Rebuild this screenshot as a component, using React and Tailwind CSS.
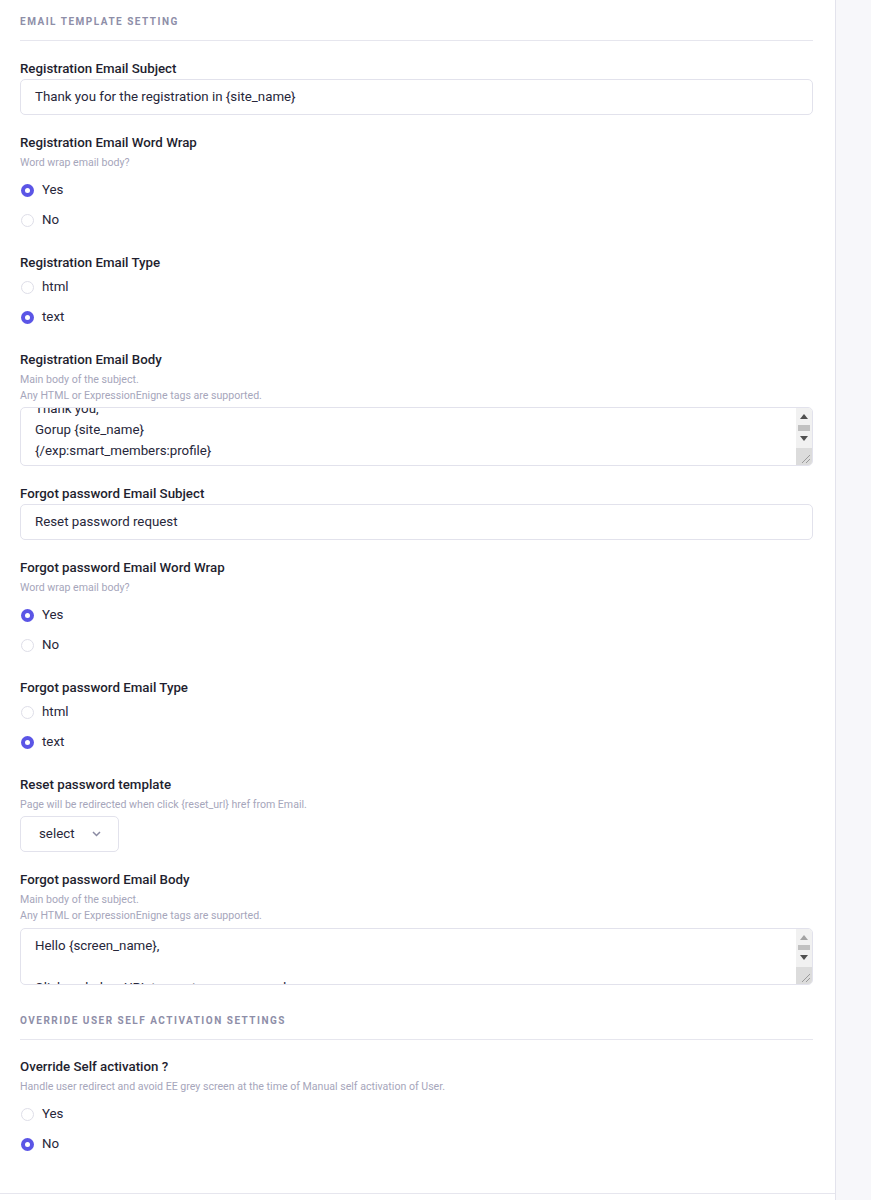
import React from "react";

function Label({ children }) {
  return (
    <div className="text-[13.3px] leading-[20px] font-medium text-[#1f1f30]">{children}</div>
  );
}

function Help({ lines, mb }) {
  return (
    <div className={`mt-[2px] ${mb}`}>
      {lines.map((l, i) => (
        <div key={i} className="text-[10.6px] leading-[16px] text-[#a6a6bb]">
          {l}
        </div>
      ))}
    </div>
  );
}

function Radio({ checked, label }) {
  return (
    <div className="flex items-center h-[20px]">
      {checked ? (
        <div className="ml-px w-[13px] h-[13px] rounded-full bg-[#5b55e6] flex items-center justify-center">
          <div className="w-[5px] h-[5px] rounded-full bg-white" />
        </div>
      ) : (
        <div className="ml-px w-[13px] h-[13px] rounded-full border border-[#dedee8] bg-white" />
      )}
      <span className="ml-[8px] text-[13.3px] text-[#27273a]">{label}</span>
    </div>
  );
}

function RadioGroup({ options, value }) {
  return (
    <div className="flex flex-col gap-[10px] pt-[4px] pb-[5px]">
      {options.map((o) => (
        <Radio key={o} label={o} checked={o === value} />
      ))}
    </div>
  );
}

function Input({ value }) {
  return (
    <div className="h-[36px] border border-[#e2e2ec] rounded-[5px] flex items-center pl-[14px] text-[13.3px] text-[#27273a]">
      {value}
    </div>
  );
}

function Arrow({ up, color }) {
  return (
    <svg width="8" height="5" viewBox="0 0 8 5">
      {up ? (
        <polygon points="0,5 8,5 4,0" fill={color} />
      ) : (
        <polygon points="0,0 8,0 4,5" fill={color} />
      )}
    </svg>
  );
}

function Grip() {
  return (
    <svg width="16" height="17" viewBox="0 0 16 17" className="block">
      <line x1="14" y1="7" x2="6" y2="15" stroke="#9a9a9a" strokeWidth="1" />
      <line x1="14" y1="11" x2="10" y2="15" stroke="#9a9a9a" strokeWidth="1" />
    </svg>
  );
}

function FakeTextarea({ h, offset, lines, upColor, upH, thumbH, downH }) {
  return (
    <div className={`border border-[#e2e2ec] rounded-[5px] flex overflow-hidden ${h}`}>
      <div className="flex-1 overflow-hidden pl-[14px] text-[13.3px] leading-[21px] text-[#27273a]">
        <div className={offset}>
          {lines.map((l, i) => (
            <div key={i} className="h-[21px] whitespace-pre">
              {l}
            </div>
          ))}
        </div>
      </div>
      <div className="w-[16px] bg-[#f1f1f1] flex flex-col">
        <div className={`${upH} flex items-center justify-center`}>
          <Arrow up color={upColor} />
        </div>
        <div className={`${thumbH} flex justify-center`}>
          <div className="w-[12px] h-full bg-[#c1c1c1]" />
        </div>
        <div className={`${downH} flex items-center justify-center`}>
          <Arrow color="#505050" />
        </div>
        <div className="flex-1" />
        <div className="h-[17px] bg-[#dcdcdc]">
          <Grip />
        </div>
      </div>
    </div>
  );
}

function SectionHeader({ children, className }) {
  return (
    <div className={`pb-[10px] border-b border-[#e6e6ee] ${className}`}>
      <div className="text-[10px] leading-[16px] font-bold tracking-[0.15em] text-[#8e8ea8] uppercase">
        {children}
      </div>
    </div>
  );
}

export default function App() {
  return (
    <div className="flex min-h-[1200px] font-[Roboto,sans-serif] bg-white">
      <div className="w-[836px] border-r border-[#e3e3ec] bg-white flex flex-col">
        <div className="pl-[20px] pr-[22px] pt-[14px] pb-[34px] border-b border-[#e6e6ee]">
          <SectionHeader>Email Template Setting</SectionHeader>

          <div className="mt-[18px] flex flex-col gap-[18px]">
            <div>
              <Label>Registration Email Subject</Label>
              <Input value="Thank you for the registration in {site_name}" />
            </div>

            <div>
              <Label>Registration Email Word Wrap</Label>
              <Help lines={["Word wrap email body?"]} mb="mb-[5px]" />
              <RadioGroup options={["Yes", "No"]} value="Yes" />
            </div>

            <div>
              <Label>Registration Email Type</Label>
              <RadioGroup options={["html", "text"]} value="text" />
            </div>

            <div>
              <Label>Registration Email Body</Label>
              <Help
                lines={[
                  "Main body of the subject.",
                  "Any HTML or ExpressionEnigne tags are supported.",
                ]}
                mb="mb-[3px]"
              />
              <FakeTextarea
                h="h-[59px]"
                offset="-mt-[10px]"
                lines={["Thank you,", "Gorup {site_name}", "{/exp:smart_members:profile}"]}
                upColor="#505050"
                upH="h-[17px]"
                thumbH="h-[6px]"
                downH="h-[15px]"
              />
            </div>

            <div>
              <Label>Forgot password Email Subject</Label>
              <Input value="Reset password request" />
            </div>

            <div>
              <Label>Forgot password Email Word Wrap</Label>
              <Help lines={["Word wrap email body?"]} mb="mb-[5px]" />
              <RadioGroup options={["Yes", "No"]} value="Yes" />
            </div>

            <div>
              <Label>Forgot password Email Type</Label>
              <RadioGroup options={["html", "text"]} value="text" />
            </div>

            <div>
              <Label>Reset password template</Label>
              <Help
                lines={["Page will be redirected when click {reset_url} href from Email."]}
                mb="mb-[3px]"
              />
              <div className="w-[99px] h-[36px] border border-[#e2e2ec] rounded-[5px] flex items-center pl-[18px] text-[13.3px] text-[#27273a]">
                <span>select</span>
                <svg width="9" height="6" viewBox="0 0 9 6" className="ml-[17px]">
                  <polyline points="1,1 4.5,4.5 8,1" fill="none" stroke="#8a8aa2" strokeWidth="1.5" />
                </svg>
              </div>
            </div>

            <div>
              <Label>Forgot password Email Body</Label>
              <Help
                lines={[
                  "Main body of the subject.",
                  "Any HTML or ExpressionEnigne tags are supported.",
                ]}
                mb="mb-[4px]"
              />
              <FakeTextarea
                h="h-[57px]"
                offset="mt-[6px]"
                lines={["Hello {screen_name},", " ", "Click on below URL to reset your password"]}
                upColor="#a3a3a3"
                upH="h-[16px]"
                thumbH="h-[5px]"
                downH="h-[15px]"
              />
            </div>
          </div>

          <SectionHeader className="mt-[28px]">Override User Self Activation Settings</SectionHeader>

          <div className="mt-[17px]">
            <Label>Override Self activation ?</Label>
            <Help
              lines={[
                "Handle user redirect and avoid EE grey screen at the time of Manual self activation of User.",
              ]}
              mb="mb-[5px]"
            />
            <RadioGroup options={["Yes", "No"]} value="No" />
          </div>
        </div>
        <div className="flex-1 bg-white" />
      </div>
      <div className="flex-1 bg-[#f7f7fa]" />
    </div>
  );
}
